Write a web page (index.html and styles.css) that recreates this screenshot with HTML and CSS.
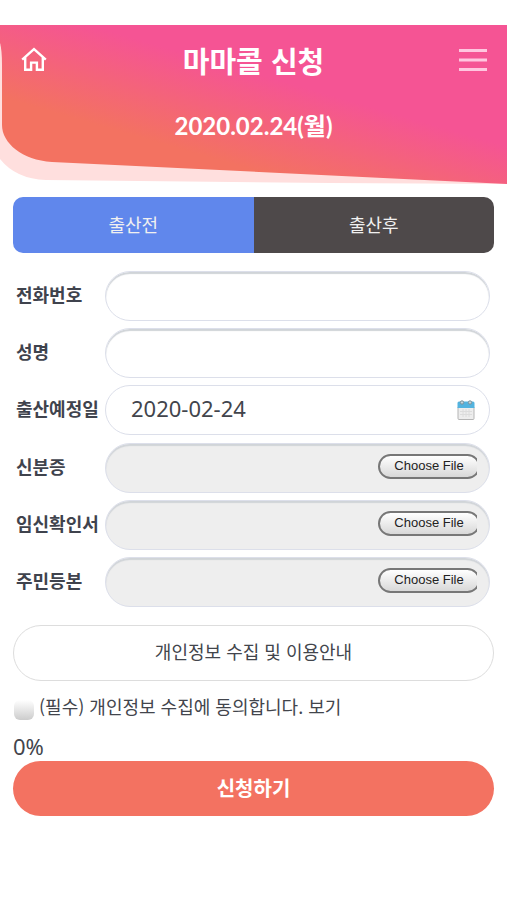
FILE: index.html
```html
<!DOCTYPE html>
<html lang="ko">
<head>
<meta charset="utf-8">
<meta name="viewport" content="width=device-width, initial-scale=1">
<title>마마콜 신청</title>
<link rel="stylesheet" href="styles.css">
</head>
<body>
<header class="header">
  <svg class="header-bg" viewBox="0 0 507 160" preserveAspectRatio="none" aria-hidden="true">
    <defs>
      <linearGradient id="sunset" gradientUnits="userSpaceOnUse" x1="0" y1="72" x2="26" y2="-18">
        <stop offset="0" stop-color="#f37261"/>
        <stop offset="1" stop-color="#f55494"/>
      </linearGradient>
    </defs>
    <path fill="#ffdfde" d="M0 20V134Q16 154 46 155L330 158L507 159V100Z"/>
    <path fill="url(#sunset)" d="M0 0H507V159L52 137C22 135 2 118 2 100V40Q2 25 0 18Z"/>
  </svg>
  <div class="header-bar">
    <a class="icon-link" href="#" aria-label="홈">
      <svg width="28" height="26" viewBox="0 0 28 26" fill="none" stroke="#fff" stroke-width="2.400">
        <path d="M2.200 12.600L14 2.200L25.800 12.600M5.200 10.500V22.800H11.100V15.600H16.900V22.800H22.800V10.500"/>
      </svg>
    </a>
    <h1 class="title">마마콜 신청</h1>
    <button class="icon-link" type="button" aria-label="메뉴">
      <svg width="28" height="26" viewBox="0 0 28 26" fill="#ffc6df">
        <path d="M0 2H28V5H0ZM0 11.500H28V14.500H0ZM0 21H28V24H0Z"/>
      </svg>
    </button>
  </div>
  <p class="today">2020.02.24(월)</p>
</header>
<main class="content">
  <nav class="tabs">
    <button class="tab tab-active" type="button">출산전</button>
    <button class="tab" type="button">출산후</button>
  </nav>
  <form class="form">
    <div class="group">
      <div class="row">
        <label class="label" for="phone">전화번호</label>
        <input class="field" id="phone" type="tel">
      </div>
      <div class="row">
        <label class="label" for="name">성명</label>
        <input class="field" id="name" type="text">
      </div>
      <div class="row">
        <label class="label" for="due">출산예정일</label>
        <div class="field field-date">
          <input class="date-input" id="due" type="text" value="2020-02-24">
          <button class="calendar" type="button" aria-label="날짜 선택">
            <svg width="18" height="20" viewBox="0 0 18 20">
              <path fill="#ededed" stroke="#b5b5b5" d="M1 7H17V18.500Q17 19.500 16 19.500H2Q1 19.500 1 18.500Z"/>
              <path fill="#52b3df" d="M.5 8V3Q.5 1.500 2 1.500H16Q17.500 1.500 17.500 3V8Z"/>
              <path fill="none" stroke="#dcdcdc" d="M3 11.500H15M3 14.500H15M6 9V17M9 9V17M12 9V17"/>
              <g fill="#c6d4da" stroke="#76909b"><circle cx="5" cy="2.500" r="1.700"/><circle cx="13" cy="2.500" r="1.700"/></g>
            </svg>
          </button>
        </div>
      </div>
    </div>
    <div class="group">
      <div class="row">
        <label class="label" for="idcard">신분증</label>
        <div class="field field-file"><input class="file" id="idcard" type="file"></div>
      </div>
      <div class="row">
        <label class="label" for="pregnancy">임신확인서</label>
        <div class="field field-file"><input class="file" id="pregnancy" type="file"></div>
      </div>
      <div class="row">
        <label class="label" for="resident">주민등본</label>
        <div class="field field-file"><input class="file" id="resident" type="file"></div>
      </div>
    </div>
    <button class="privacy" type="button">개인정보 수집 및 이용안내</button>
    <div class="consent">
      <input class="check" id="agree" type="checkbox">
      <label for="agree">(필수) 개인정보 수집에 동의합니다.</label>
      <a class="view" href="#">보기</a>
    </div>
    <p class="progress">0%</p>
    <button class="submit" type="submit">신청하기</button>
  </form>
</main>
</body>
</html>
```
FILE: styles.css
```css
* {
  box-sizing: border-box;
}

body {
  margin: 0;
  padding-top: 25px;
  background: #fff;
  color: #42454c;
  font: 18px/28px "Noto Sans CJK KR", sans-serif;
}

button,
input {
  margin: 0;
  font: inherit;
  color: inherit;
}

a {
  color: inherit;
  text-decoration: none;
}

.header {
  position: relative;
  height: 160px;
  color: #fff;
}

.header-bg {
  position: absolute;
  inset: 0;
  z-index: -1;
  width: 100%;
  height: 100%;
}

.header-bar {
  display: flex;
  align-items: center;
  justify-content: space-between;
  height: 70px;
  padding: 0 20px;
}

.icon-link {
  display: flex;
  padding: 0;
  border: 0;
  background: none;
}

.title {
  margin: 0;
  font-size: 29px;
  line-height: 40px;
  font-weight: 700;
}

.today {
  margin: 15px 0 0;
  text-align: center;
  font: 700 24px/32px Lato, "Noto Sans CJK KR", sans-serif;
}

.content {
  padding: 12px 13px;
}

.tabs {
  display: flex;
  overflow: hidden;
  border-radius: 10px;
}

.tab {
  flex: 1;
  height: 56px;
  padding: 0 0 2px;
  border: 0;
  background: #4e494a;
  color: #f0f0f0;
}

.tab-active {
  background: #6087ec;
}

.form {
  display: flex;
  flex-direction: column;
  padding-top: 18px;
}

.group {
  display: grid;
  gap: 7px;
  margin-bottom: 8px;
  padding: 0 4px 0 3px;
}

.row {
  display: grid;
  grid-template-columns: 89px 1fr;
  align-items: center;
}

.label {
  padding-bottom: 4px;
  font-weight: 700;
  white-space: nowrap;
  color: #3f434d;
}

.field {
  width: 100%;
  min-width: 0;
  height: 50px;
  padding: 0 24px;
  border: 1px solid #dcdfea;
  border-radius: 25px;
  background: #fff;
  box-shadow: inset 0 2px 1px #d0d4d8;
}

.field-date {
  display: flex;
  align-items: center;
  padding: 0 14px 0 25px;
  box-shadow: none;
}

.date-input {
  flex: 1;
  min-width: 0;
  padding: 0 0 4px;
  border: 0;
  background: none;
  font: 22px/28px "Noto Sans", sans-serif;
}

.calendar {
  display: flex;
  padding: 0;
  border: 0;
  background: none;
}

.field-file {
  display: flex;
  align-items: center;
  justify-content: flex-end;
  padding: 0 12px 4px;
  background: #eee;
}

.file {
  width: 99px;
  overflow: hidden;
  color: transparent;
  font: 13px/20px "Liberation Sans", sans-serif;
}

.file::file-selector-button {
  width: 102px;
  height: 25px;
  margin: 0;
  padding: 0;
  border: 2px solid #777;
  border-radius: 13px;
  background: linear-gradient(#fff, #d8d8d8);
  color: #222;
  font: inherit;
}

.privacy {
  height: 56px;
  margin-top: 10px;
  padding: 0 0 4px;
  border: 1px solid #ddd;
  border-radius: 28px;
  background: #fff;
}

.consent {
  display: flex;
  align-items: center;
  gap: 5px;
  margin-top: 11px;
}

.check {
  appearance: none;
  align-self: flex-end;
  width: 20px;
  height: 20px;
  margin-left: 1px;
  border-radius: 6px;
  background: linear-gradient(#fff, #ccc);
}

.progress {
  margin: 11px 0 0;
  font: 22px/30px "Noto Sans", sans-serif;
}

.submit {
  height: 55px;
  padding: 0 0 2px;
  border: 0;
  border-radius: 28px;
  background: #f37261;
  color: #fff;
  font-size: 20px;
  font-weight: 700;
}
```
